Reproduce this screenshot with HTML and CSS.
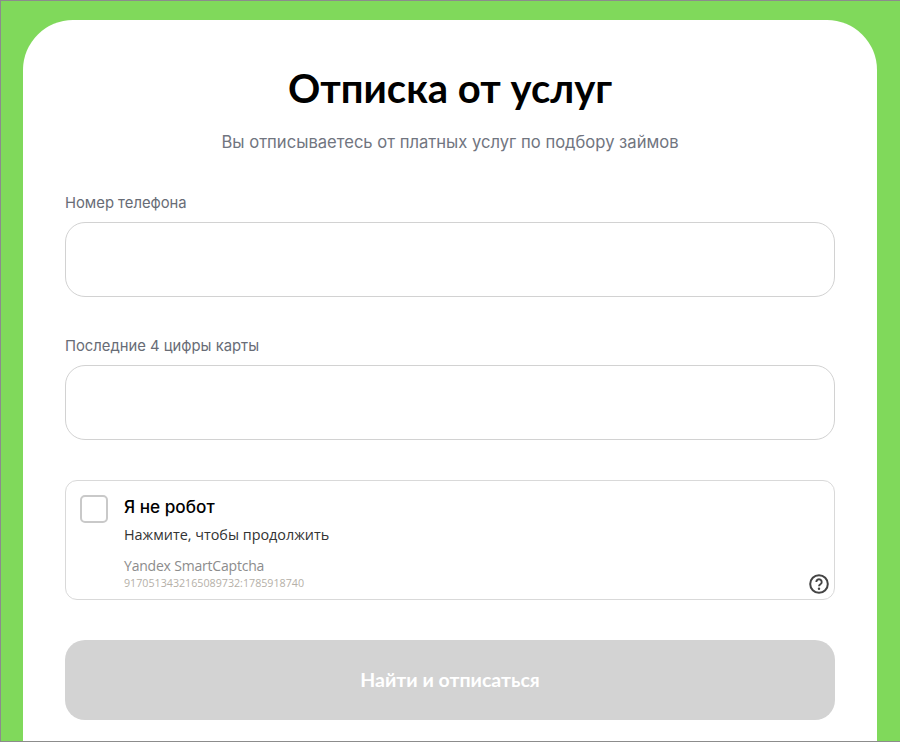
FILE: index.html
```html
<!DOCTYPE html>

<html lang="ru">
    <head>
        <meta charset="utf-8">
        <title>Отписка от услуг</title>
        <link rel="stylesheet" href="styles.css">
    </head>

    <body>
        <main class="card">
            <h1 class="title">Отписка от услуг</h1>
            <p class="subtitle">Вы отписываетесь от платных услуг по подбору займов</p>

            <form class="form">
                <div class="field">
                    <label class="field-label">Номер телефона</label>
                    <input class="field-input" type="text">
                </div>

                <div class="field">
                    <label class="field-label">Последние 4 цифры карты</label>
                    <input class="field-input" type="text">
                </div>

                <div class="captcha">
                    <span class="captcha-box"></span>
                    <div class="captcha-text">
                        <div class="captcha-title">Я не робот</div>
                        <div class="captcha-hint">Нажмите, чтобы продолжить</div>
                        <div class="captcha-brand">Yandex SmartCaptcha</div>
                        <div class="captcha-id">9170513432165089732:1785918740</div>
                    </div>
                    <svg class="captcha-help" width="20" height="20" viewBox="0 0 20 20">
                        <circle cx="10" cy="10" r="8.8" fill="none" stroke="#444" stroke-width="2"/>
                        <path d="M7.3 8a2.7 2.7 0 1 1 4.1 2.3c-.9.6-1.4 1-1.4 2" fill="none" stroke="#444" stroke-width="1.9"/>
                        <circle cx="10" cy="14.7" r="1.2" fill="#444"/>
                    </svg>
                </div>

                <button class="submit" type="button">Найти и отписаться</button>
            </form>
        </main>
    </body>
</html>
```

FILE: styles.css
```css
html { height: 100%; }

body
{
    margin: 0; height: 100%; box-sizing: border-box; overflow: hidden;
    background: #80d95b;
    border: 1px solid #8c8c8c;
    border-right: 0;
    padding: 19px 23px 0 22px;
    font-family: Inter, sans-serif;
}

.card
{
    background: white;
    border-radius: 50px 50px 0 0;
    height: 100%; box-sizing: border-box;
    padding: 43px 42px 0;
}

.title
{
    margin: 0; text-align: center;
    font-family: Lato, sans-serif; font-size: 40px; line-height: 50px; font-weight: 700; color: black;
}
.subtitle
{
    margin: 18px 0 0; text-align: center;
    font-size: 16.6px; line-height: 22px; color: #71757f;
}

.form { margin-top: 41px; }

.field { margin-bottom: 40px; }
.field-label
{
    display: block; margin-bottom: 10px;
    font-size: 14.8px; line-height: 18px; font-weight: 400; color: #686c76;
}
.field-input
{
    display: block; width: 100%; height: 75px; box-sizing: border-box;
    border: 1px solid #d2d2d2; border-radius: 20px; background: white;
}

.captcha
{
    position: relative; display: flex; gap: 16px;
    height: 120px; box-sizing: border-box; padding: 14px;
    border: 1px solid #d9d9d9; border-radius: 12px;
    font-family: "Open Sans", sans-serif;
}
.captcha-box
{
    width: 28px; height: 28px; box-sizing: border-box; flex: none;
    border: 2px solid #c9c9c9; border-radius: 5px;
}
.captcha-title { font-family: Inter, sans-serif; font-size: 17.2px; line-height: 24px; font-weight: 500; color: black; }
.captcha-hint { margin-top: 6px; font-size: 14.4px; line-height: 20px; color: #333; }
.captcha-brand { margin-top: 12px; font-size: 14px; line-height: 18px; color: #8c8c8c; letter-spacing: -0.2px; }
.captcha-id { margin-top: 1px; font-size: 10.7px; line-height: 14px; color: #b5b0a8; }
.captcha-help { position: absolute; right: 5px; bottom: 5px; }

.submit
{
    display: block; width: 100%; height: 80px; margin-top: 40px; padding-bottom: 2px;
    border: 0; border-radius: 20px; background: #d3d3d3; color: white;
    font-family: Lato, sans-serif; font-size: 19.5px; font-weight: 700;
}
```
